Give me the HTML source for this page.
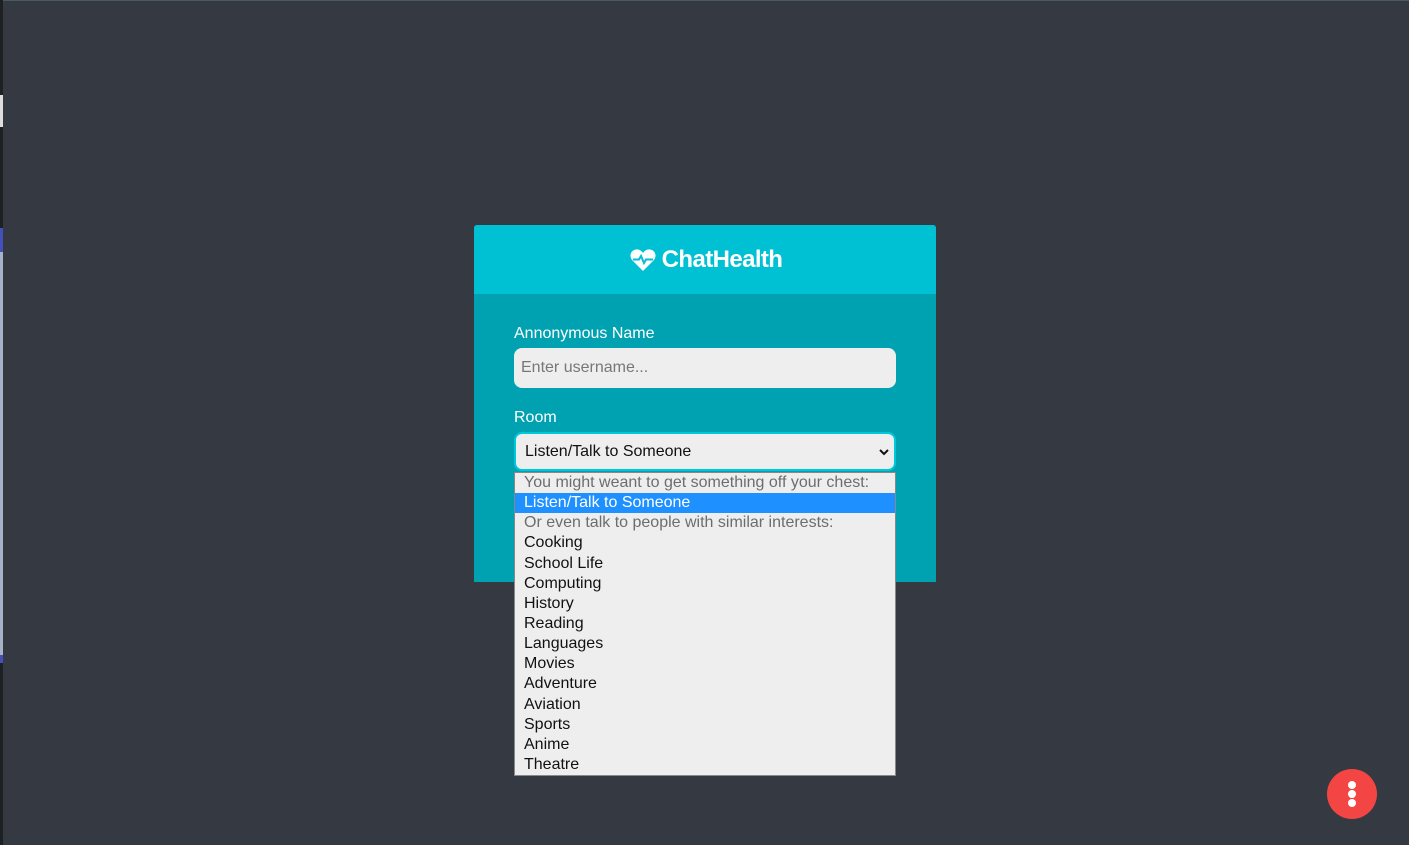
<!DOCTYPE html>
<html><head><style>
body{margin:0;width:1409px;height:845px;background:#353a42;font-family:"Liberation Sans",sans-serif;position:relative;overflow:hidden}
.l1{position:absolute;left:0;top:0;width:3px;height:845px;background:#1e2124}
.l2{position:absolute;left:0;top:95px;width:3px;height:32px;background:#ddd}
.l3{position:absolute;left:0;top:228px;width:3px;height:24px;background:#4450b8}
.l4{position:absolute;left:0;top:252px;width:3px;height:403px;background:#a5b2c8}
.l5{position:absolute;left:0;top:655px;width:3px;height:8px;background:#4450b8}
.top{position:absolute;left:0;top:0;width:1409px;height:1px;background:#4a5a60}
.card{position:absolute;left:474px;top:225px;width:462px;height:357px;background:#00a2b1;border-radius:3px 3px 0 0}
.hd{height:69px;background:#00c0d3;color:#fff;font-weight:bold;font-size:24px;letter-spacing:-0.6px;display:flex;align-items:center;justify-content:center;gap:6px;border-radius:3px 3px 0 0;padding-left:2px;box-sizing:border-box}
.lab{position:absolute;left:40px;color:#fff;font-size:16px}
.inp{position:absolute;left:40px;width:382px;background:#eee;border-radius:8px;box-sizing:border-box}
.dd{position:absolute;left:514px;top:472px;width:382px;height:304px;background:#eee;border:1px solid #888;box-sizing:border-box;font-size:16px;color:#111;padding-top:0}
.dd div{height:20.15px;line-height:19px;padding-left:9px}
.g{color:#6d6d6d}
.s{background:#1e90ff;color:#fff}
.fab{position:absolute;left:1327px;top:769px;width:50px;height:50px;border-radius:50%;background:#f44545}
.fab i{position:absolute;left:21px;width:8px;height:8px;border-radius:50%;background:#fff}
</style></head><body>
<div class="top"></div><div class="l1"></div><div class="l2"></div><div class="l3"></div><div class="l4"></div><div class="l5"></div>
<div class="card">
<div class="hd"><svg width="26" height="22" viewBox="0 0 26 22"><path d="M13 22L2.5 11.5C-1 8 0 1.5 6 0.5C9 0 11.5 2 13 4C14.5 2 17 0 20 0.5C26 1.5 27 8 23.5 11.5Z" fill="#fff"/><path d="M3 10.5H9L11 7L14 14L16 10.5H23" stroke="#00c0d3" stroke-width="2" fill="none"/></svg><span>ChatHealth</span></div>
<div class="lab" style="top:100px">Annonymous Name</div>
<div class="inp" style="top:123px;height:40px;color:#777;font-size:16px;padding:11px 7px">Enter username...</div>
<div class="lab" style="top:184px">Room</div>
<div class="inp" style="top:207px;height:39px;border:2px solid #00c8db;font-size:16px;padding:9px 9px;color:#111">Listen/Talk to Someone<svg style="position:absolute;right:5px;top:15px" width="10" height="7" viewBox="0 0 10 7"><path d="M1 1L5 5L9 1" stroke="#111" stroke-width="2" fill="none"/></svg></div>
</div>
<div class="dd">
<div class="g">You might weant to get something off your chest:</div>
<div class="s">Listen/Talk to Someone</div>
<div class="g">Or even talk to people with similar interests:</div>
<div>Cooking</div><div>School Life</div><div>Computing</div><div>History</div><div>Reading</div><div>Languages</div><div>Movies</div><div>Adventure</div><div>Aviation</div><div>Sports</div><div>Anime</div><div>Theatre</div>
</div>
<div class="fab"><i style="top:12px"></i><i style="top:21px"></i><i style="top:30px"></i></div>
</body></html>
